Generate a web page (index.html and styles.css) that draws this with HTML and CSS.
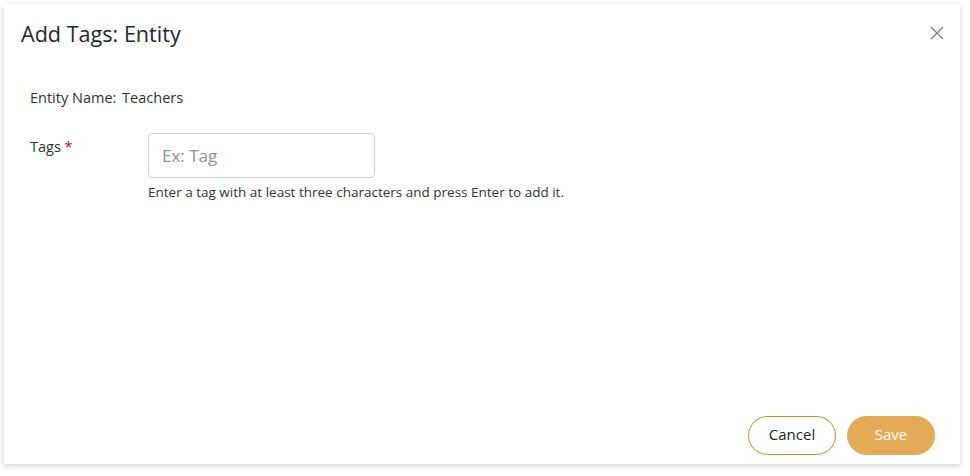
FILE: index.html
```html
<!DOCTYPE html>
<html>
<head>
<meta charset="utf-8">
<link rel="stylesheet" href="styles.css">
</head>
<body>
<div class="dialog">
  <div class="header">
    <h1 class="title">Add Tags: Entity</h1>
    <button class="close" aria-label="Close">
      <svg width="14" height="14" viewBox="0 0 14 14"><path d="M1 1L13 13M13 1L1 13" stroke="#7a7f87" stroke-width="1.3" fill="none"/></svg>
    </button>
  </div>
  <div class="body">
    <div class="entity"><span class="label">Entity Name:</span> <span>Teachers</span></div>
    <div class="row">
      <div class="field-label">Tags <span class="req">*</span></div>
      <div class="field">
        <input class="input" type="text" placeholder="Ex: Tag">
        <div class="help">Enter a tag with at least three characters and press Enter to add it.</div>
      </div>
    </div>
  </div>
  <div class="footer">
    <button class="btn btn-cancel">Cancel</button>
    <button class="btn btn-save">Save</button>
  </div>
</div>
</body>
</html>
```
FILE: styles.css
```css
* { box-sizing: border-box; }
html, body { margin: 0; padding: 0; background: #fff; }
body {
  font-family: "Open Sans", Lato, sans-serif;
  color: #2b2f36;
  padding: 4px 10px 10px 4px;
  height: 476px;
}
.dialog {
  width: 956px;
  height: 460px;
  background: #fff;
  box-shadow: 0 2px 6px rgba(0,0,0,0.18);
  display: flex;
  flex-direction: column;
}
.header {
  display: flex;
  align-items: center;
  justify-content: space-between;
  padding: 0 16px 0 17px;
  height: 58px;
}
.title {
  margin: 0;
  font-size: 21.6px;
  font-weight: 400;
  color: #222733;
}
.close {
  border: 0;
  background: none;
  padding: 0;
  width: 14px;
  height: 14px;
  display: flex;
  cursor: pointer;
}
.body {
  flex: 1;
  padding: 25px 26px 0;
  font-size: 14.5px;
}
.entity {
  color: #333;
  padding-top: 1px;
  line-height: 20px;
}
.label { margin-right: 2px; }
.row {
  display: flex;
  margin-top: 25px;
}
.field-label {
  width: 118px;
  padding-top: 4px;
  line-height: 20px;
  color: #333;
}
.req { color: #d0021b; }
.field { display: flex; flex-direction: column; }
.input {
  width: 227px;
  height: 45px;
  border: 1px solid #ccd0d6;
  border-radius: 4px;
  padding: 0 13px;
  font-family: inherit;
  font-size: 17px;
  color: #333;
  outline: none;
}
.input::placeholder { color: #8e939a; }
.help {
  margin-top: 5px;
  font-size: 13.5px;
  color: #333;
}
.footer {
  display: flex;
  justify-content: flex-end;
  gap: 11px;
  padding: 0 25px 9px 0;
}
.btn {
  width: 88px;
  height: 39px;
  border-radius: 20px;
  font-family: inherit;
  font-size: 15px;
  padding: 0 0 3px;
  cursor: pointer;
}
.btn-cancel {
  background: #fff;
  border: 1px solid #d98a16;
  color: #222;
}
.btn-save {
  background: #e5aa55;
  border: 1px solid #e5aa55;
  color: #fff;
}
```
